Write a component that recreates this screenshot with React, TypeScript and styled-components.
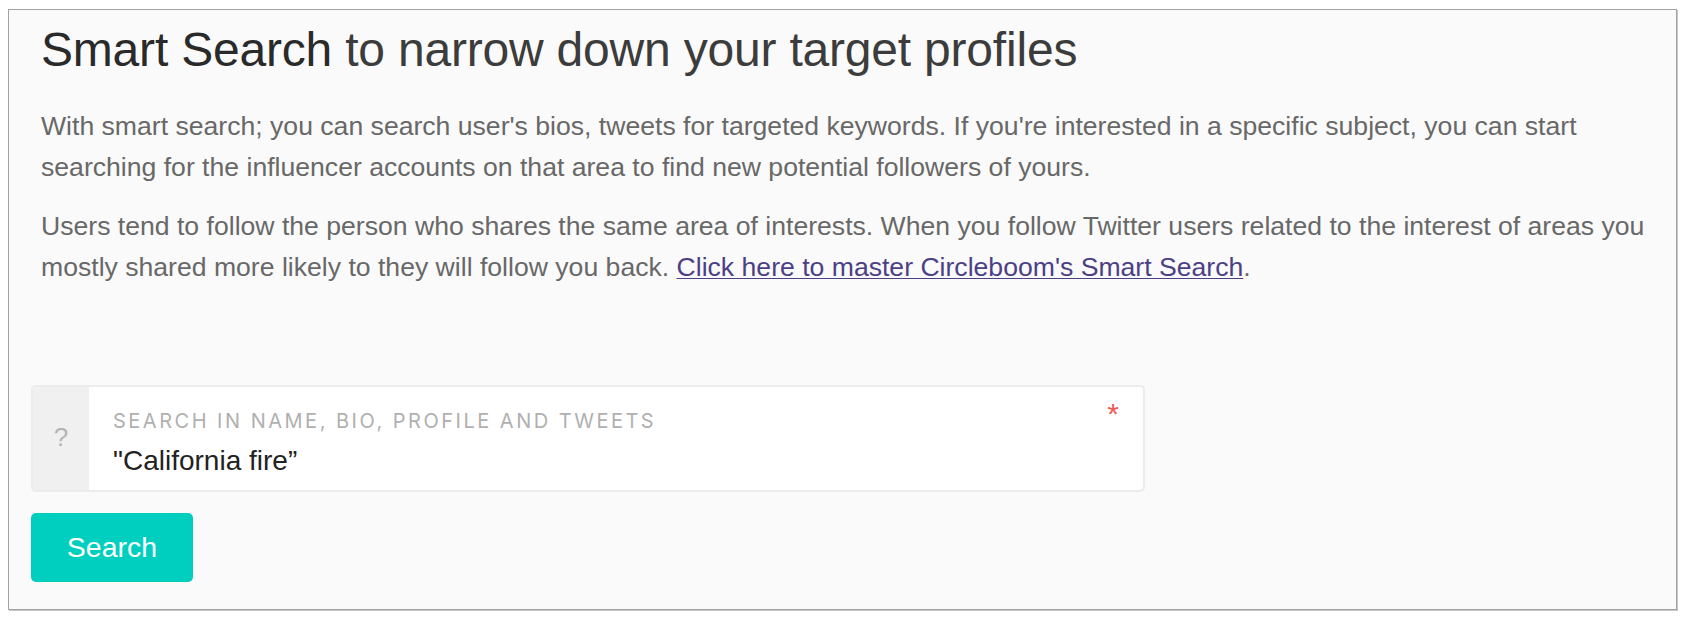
import styled, { createGlobalStyle } from "styled-components";

const GlobalStyle = createGlobalStyle`
  html, body {
    margin: 0;
    padding: 0;
    background: #ffffff;
  }
  body {
    font-family: "Liberation Sans", Arial, sans-serif;
  }
`;

export default function App() {
  return (
    <>
      <GlobalStyle />
      <Page>
        <Panel>
          <Intro>
            <Title>
              <Strong>Smart Search</Strong>
              <Light> to narrow down your target profiles</Light>
            </Title>
            <Text>
              With smart search; you can search user's bios, tweets for targeted keywords. If you're
              interested in a specific subject, you can start searching for the influencer accounts on
              that area to find new potential followers of yours.
            </Text>
            <Text>
              Users tend to follow the person who shares the same area of interests. When you follow
              Twitter users related to the interest of areas you mostly shared more likely to they will
              follow you back. <Link href="#">Click here to master Circleboom's Smart Search</Link>.
            </Text>
          </Intro>

          <Form>
            <InputGroup>
              <Addon>?</Addon>
              <Field>
                <FieldBody>
                  <Label>Search in name, bio, profile and tweets</Label>
                  <Value>"California fire”</Value>
                </FieldBody>
                <Required>*</Required>
              </Field>
            </InputGroup>
            <SearchButton type="button">Search</SearchButton>
          </Form>
        </Panel>
      </Page>
    </>
  );
}

// ---------------------------------------------------------------------------
// Styles
// ---------------------------------------------------------------------------

const Page = styled.div`
  padding: 9px 11px 14px 8px;
  width: 1688px;
  height: 624px;
  box-sizing: border-box;
`;

const Panel = styled.div`
  border: 1px solid #a3a3a3;
  box-shadow: 1px 1px 0 #c4c4c4;
  background: #fafafa;
  height: 601px;
  box-sizing: border-box;
  display: flex;
  flex-direction: column;
`;

const Intro = styled.div`
  padding: 16px 12px 0 32px;
`;

const Title = styled.h1`
  margin: 0 0 32px;
  font-size: 48px;
  line-height: 48px;
  font-weight: 400;
  color: #2e2e2e;
  letter-spacing: -0.2px;
`;

const Strong = styled.span`
  color: #2a2a2a;
`;

const Light = styled.span`
  color: #3c3c3c;
`;

const Text = styled.p`
  margin: 0 0 19px;
  font-size: 26.6px;
  line-height: 40.5px;
  color: #686868;
`;

const Link = styled.a`
  color: #4c3f86;
  text-decoration: underline;
  text-decoration-thickness: 1px;
  text-underline-offset: 2px;
`;

const Form = styled.div`
  margin-top: auto;
  padding: 0 22px 27px;
  display: flex;
  flex-direction: column;
  align-items: flex-start;
  gap: 21px;
`;

const InputGroup = styled.div`
  display: flex;
  width: 1114px;
  height: 107px;
  box-sizing: border-box;
  border: 2px solid #ececec;
  border-radius: 5px;
  background: #ffffff;
  overflow: hidden;
`;

const Addon = styled.div`
  width: 56px;
  flex: none;
  background: #f0f0f0;
  display: flex;
  align-items: center;
  justify-content: center;
  padding-bottom: 2px;
  box-sizing: border-box;
  font-size: 26px;
  color: #b4b4b4;
`;

const Field = styled.div`
  flex: 1;
  display: flex;
  padding: 0 24px 0 24px;
`;

const FieldBody = styled.div`
  flex: 1;
  display: flex;
  flex-direction: column;
  padding-top: 22px;
`;

const Label = styled.div`
  font-family: Inter, "Noto Sans", sans-serif;
  font-size: 20px;
  line-height: 24px;
  text-transform: uppercase;
  letter-spacing: 2.5px;
  color: #b0b0b0;
`;

const Value = styled.div`
  margin-top: 13px;
  font-size: 28px;
  line-height: 30px;
  color: #222222;
`;

const Required = styled.span`
  font-size: 30px;
  line-height: 30px;
  padding-top: 12px;
  color: #ee5a5a;
`;

const SearchButton = styled.button`
  width: 162px;
  height: 69px;
  border: none;
  border-radius: 5px;
  background: #00cfc0;
  color: #ffffff;
  font-family: "Liberation Sans", Arial, sans-serif;
  font-size: 28.5px;
  cursor: pointer;
`;
